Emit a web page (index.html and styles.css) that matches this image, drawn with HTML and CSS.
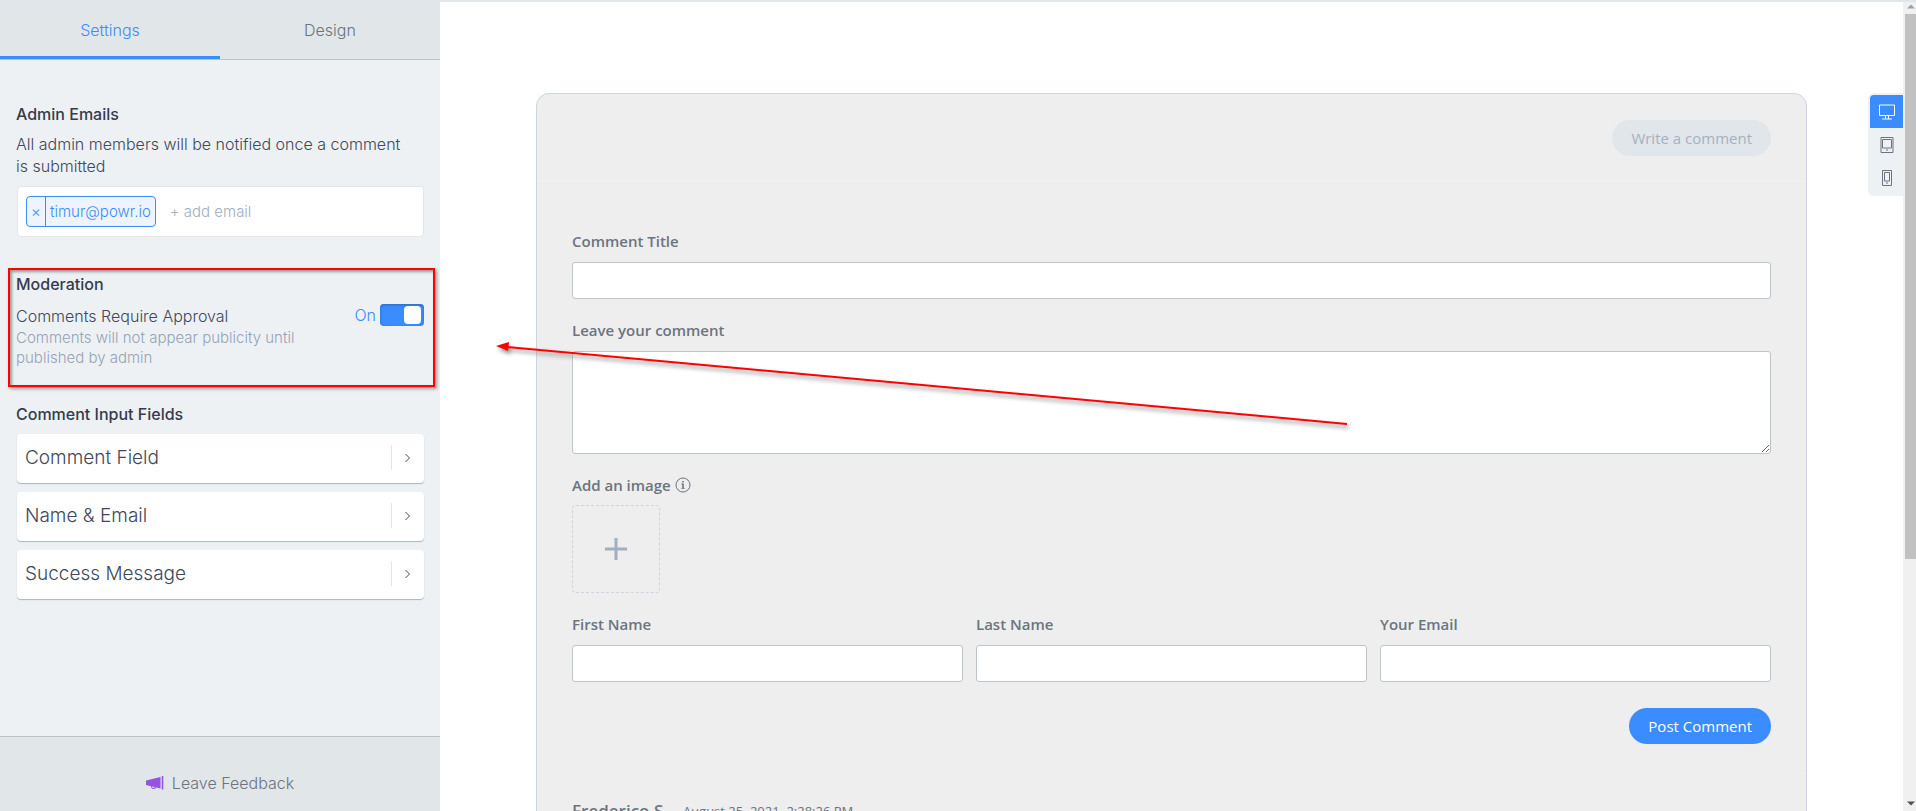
FILE: index.html
```html
<!DOCTYPE html>
<html lang="en">
<head>
  <meta charset="UTF-8">
  <meta name="viewport" content="width=device-width, initial-scale=1.0">
  <link rel="stylesheet" href="styles.css">
  <title>Comments</title>
</head>
<body>

  <div class="app">

    <!-- left settings panel -->
    <aside class="sidebar">
      <nav class="tabs">
        <button type="button" class="tab active">Settings</button>
        <button type="button" class="tab">Design</button>
      </nav>

      <div class="panel">
        <section class="emails">
          <h2>Admin Emails</h2>
          <p>All admin members will be notified once a comment is submitted</p>
          <div class="email_box">
            <span class="chip"><button type="button" aria-label="Remove timur@powr.io">×</button><span>timur@powr.io</span></span>
            <input type="text" class="email_input" placeholder="+ add email" aria-label="Add email">
          </div>
        </section>

        <section class="moderation">
          <h2>Moderation</h2>
          <div class="approval">
            <div class="approval_text">
              <label for="approval">Comments Require Approval</label>
              <p>Comments will not appear publicity until published by admin</p>
            </div>
            <div class="switch_wrap">
              <span>On</span>
              <input type="checkbox" id="approval" class="switch" checked>
            </div>
          </div>
        </section>

        <section class="fields">
          <h2>Comment Input Fields</h2>
          <button type="button" class="field_btn"><span>Comment Field</span><i><svg width="8" height="10" viewBox="0 0 8 10"><path d="M1.5 1l4 4-4 4"/></svg></i></button>
          <button type="button" class="field_btn"><span>Name &amp; Email</span><i><svg width="8" height="10" viewBox="0 0 8 10"><path d="M1.5 1l4 4-4 4"/></svg></i></button>
          <button type="button" class="field_btn"><span>Success Message</span><i><svg width="8" height="10" viewBox="0 0 8 10"><path d="M1.5 1l4 4-4 4"/></svg></i></button>
        </section>
      </div>

      <button type="button" class="feedback">
        <svg width="18" height="14" viewBox="0 0 18 14"><path fill="#9553e0" fill-rule="evenodd" d="M0 4.500L14.500 1v11.500L10 11.400a2.600 2.600 0 0 1-5-1.200L0 9zM6 10.500a1.500 1.500 0 0 0 2.900.6zM15.700 0h1.600v13.500h-1.600z"/></svg>
        <span>Leave Feedback</span>
      </button>
    </aside>

    <!-- live preview -->
    <main class="preview">
      <div class="card">
        <header class="card_head">
          <button type="button" class="write_btn" disabled>Write a comment</button>
        </header>

        <form class="comment_form">
          <div class="row">
            <label for="title">Comment Title</label>
            <input type="text" id="title">
          </div>
          <div class="row">
            <label for="comment">Leave your comment</label>
            <textarea id="comment"></textarea>
          </div>
          <div class="row image_row">
            <span class="image_label">Add an image
              <svg width="16" height="16" viewBox="0 0 16 16"><circle cx="8" cy="8" r="7" fill="none" stroke="#6b7480"/><path fill="#6b7480" d="M7.2 4h1.600v1.500H7.200zM6.300 6.600h2.500v4.400h1v.8H6.200V11h1V7.400h-.9z"/></svg>
            </span>
            <button type="button" class="upload" aria-label="Add an image">
              <svg width="22" height="22" viewBox="0 0 22 22"><path d="M11 0v22M0 11h22" stroke="#a0aec0" stroke-width="3"/></svg>
            </button>
          </div>
          <div class="names">
            <div class="row"><label for="first">First Name</label><input type="text" id="first"></div>
            <div class="row"><label for="last">Last Name</label><input type="text" id="last"></div>
            <div class="row"><label for="email">Your Email</label><input type="text" id="email"></div>
          </div>
          <button type="button" class="post_btn">Post Comment</button>
        </form>

        <article class="comment">
          <h3>Frederico S.</h3>
          <time>August 25, 2021, 2:28:26 PM</time>
        </article>
      </div>

      <div class="devices">
        <button type="button" class="device active" aria-label="Desktop"><svg width="18" height="16" viewBox="0 0 18 16"><path d="M1.500 1h15v10.500h-15zM7.500 12v3M10.500 12v3M4 15h10"/></svg></button>
        <button type="button" class="device" aria-label="Tablet"><svg width="14" height="16" viewBox="0 0 14 16"><path d="M1 .5h12v15H1zM2.500 2.500h9v8.500h-9zM6 13h2"/></svg></button>
        <button type="button" class="device" aria-label="Mobile"><svg width="10" height="16" viewBox="0 0 10 16"><path d="M.5 .5h9v15h-9zM2.500 2.500h5v8.500h-5zM4 13h2"/></svg></button>
      </div>
    </main>

    <div class="scrollbar">
      <svg width="8" height="5" viewBox="0 0 8 5"><path d="M0 4.500L4 .5l4 4z" fill="#a3a3a3"/></svg>
      <div class="thumb"></div>
      <svg width="8" height="5" viewBox="0 0 8 5"><path d="M0 .5h8l-4 4z" fill="#505050"/></svg>
    </div>

    <!-- arrow over the page, pointing to the moderation block -->
    <svg class="arrow" width="860" height="96" viewBox="0 0 860 96">
      <path d="M12 8L852 85" stroke="#f00" stroke-width="2"/>
      <path d="M1 7l13-4-1 9z" fill="#f00"/>
    </svg>
  </div>

</body>
</html>
```
FILE: styles.css
```css
*{
  box-sizing:border-box;
}

body,h2,h3,p{
  margin:0px; padding:0px;
}

body{
  font-family:"Inter", "Lato", sans-serif; font-size:16px; font-weight:300; color:#404859; background:#fff;
}

button,input,textarea{
  font:inherit; color:inherit;
}

button{
  border:0px; padding:0px; background:none;
}

.app{
  display:flex; height:100vh; overflow:hidden; position:relative; border-top:2px solid #e1e6ea;
}

/* sidebar */

.sidebar{
  width:440px; flex:none; display:flex; flex-direction:column; background:#edf1f4;
}

.tabs{
  display:flex; height:58px; background:#e1e6e9; border-bottom:1px solid #bcc3c7;
}

.tab{
  flex:1; padding-top:2px; border-bottom:3px solid transparent; color:#6b7480;
}

.tab.active{
  color:#3b8cff; border-color:#3b8cff;
}

.panel{
  flex:1; padding:44px 16px 0px;
}

.panel h2{
  font-size:16px; line-height:20px; font-weight:500; color:#353b4c;
}

.emails p{
  margin-top:9px; padding-right:12px; line-height:22px;
}

.email_box{
  display:flex; align-items:center; gap:14px; height:51px; margin:9px 0px 0px 1px; padding:0px 8px;
  border:1px solid #e1e6ea; border-radius:4px; background:#fff; font-size:15px;
}

.chip{
  display:flex; align-items:center; height:31px; border:1px solid #3b8cff; border-radius:4px; background:#edf4ff; color:#3b8cff;
}

.chip button{
  width:19px; height:29px; border-right:1px solid #3b8cff;
}

.chip span{
  padding:0px 4px;
}

.email_input{
  flex:1; min-width:0px; border:0px; padding:0px; outline:none;
}

.email_input::placeholder{
  color:#a0aec0;
}

.moderation{
  height:119px; margin:31px -11px 0px -8px; padding:4px 9px 0px 6px;
  border:2px solid #f00; box-shadow:2px 2px 3px #999, inset 2px 2px 3px #999;
}

.approval{
  display:flex; justify-content:space-between; margin-top:10px;
}

.approval_text{
  width:290px;
}

.approval_text label{
  display:block; line-height:24px;
}

.approval_text p{
  font-size:15px; line-height:20px; color:#94a3b8;
}

.switch_wrap{
  display:flex; gap:4px; height:22px; line-height:22px; color:#3b8cff;
}

.switch{
  appearance:none; width:44px; height:22px; margin:0px; padding:2px 3px; border-radius:4px; background:#3b8cff;
  box-shadow:inset 0px 1px 3px #2b66bb; display:flex; justify-content:flex-end;
}

.switch::before{
  content:""; width:17px; height:18px; border-radius:4px; background:#fff;
}

.fields{
  margin-top:17px; display:flex; flex-direction:column; gap:9px;
}

.fields h2{
  margin-bottom:1px;
}

.field_btn{
  display:flex; align-items:center; justify-content:space-between; height:49px; margin-left:1px; padding:0px 0px 2px 8px;
  border-radius:4px; background:#fff; box-shadow:0px 1px 1px #a9b5bd; font-size:19px;
}

.field_btn i{
  display:flex; align-items:center; height:25px; padding:0px 12px; border-left:1px solid #e1e6ea;
}

.field_btn path{
  fill:none; stroke:#404859;
}

.feedback{
  display:flex; align-items:center; justify-content:center; gap:8px; height:75px; padding-top:18px;
  border-top:1px solid #bcc3c7; background:#e1e6e9; color:#6b7480;
}

/* preview */

.preview{
  flex:1; display:flex; min-width:0px; padding:91px 0px 0px 96px;
  font-family:"Open Sans", sans-serif; font-weight:400; color:#6b7480;
}

.card{
  flex:1; min-height:900px; border:1px solid #cbd5e0; border-radius:13px; background:#eee;
}

.card_head{
  display:flex; justify-content:flex-end; height:90px; padding:26px 35px 0px; border-bottom:1px solid #eaecf0;
}

.write_btn,.post_btn{
  height:36px; padding:0px 19px; border-radius:18px; font-size:15px;
}

.write_btn{
  background:#e1e6ea; color:#a6b0c3;
}

.comment_form{
  display:flex; flex-direction:column; gap:20px; padding:46px 35px 26px; border-bottom:1px solid #eaecf0;
}

.row{
  display:flex; flex-direction:column; gap:10px;
}

.image_row{
  gap:9px;
}

.row label,.image_label{
  font-size:15px; line-height:22px; font-weight:600;
}

.row input{
  width:100%; height:37px; border:1px solid #bcc5cb; border-radius:3px; background:#fff;
}

.row textarea{
  height:103px; border:1px solid #bcc5cb; border-radius:3px; background:#fff; resize:vertical;
}

.image_label{
  display:flex; align-items:center; gap:4px;
}

.upload{
  display:flex; align-items:center; justify-content:center; width:88px; height:88px; border:1px dashed #cbd5e0; border-radius:4px;
}

.names{
  display:grid; grid-template-columns:repeat(3,1fr); gap:13px;
}

.post_btn{
  align-self:flex-end; margin-top:6px; background:#3b8cff; color:#fff;
}

.comment{
  display:flex; align-items:center; gap:15px; padding:27px 35px;
}

.comment h3{
  font-size:17px; line-height:26px; font-weight:600;
}

.comment time{
  font-size:13px;
}

.devices{
  width:35px; height:103px; margin-left:61px; padding:2px 0px 0px 2px; border-radius:6px 0px 0px 6px; background:#edf1f4;
}

.device{
  display:flex; align-items:center; justify-content:center; width:33px; height:33px;
}

.device path{
  fill:none; stroke:#6b7480;
}

.device.active{
  border-radius:4px 0px 0px 0px; background:#3b8cff;
}

.device.active path{
  stroke:#fff;
}

/* scrollbar of the preview */

.scrollbar{
  flex:none; width:13px; display:flex; flex-direction:column; align-items:flex-end; padding:2px 1px 5px 2px; background:#f0f0f0;
}

.thumb{
  width:11px; height:68%; margin:5px -1px auto 0px; background:#c1c1c1;
}

.arrow{
  position:absolute; left:495px; top:337px; filter:drop-shadow(2px 3px 2px #888); pointer-events:none;
}
```
